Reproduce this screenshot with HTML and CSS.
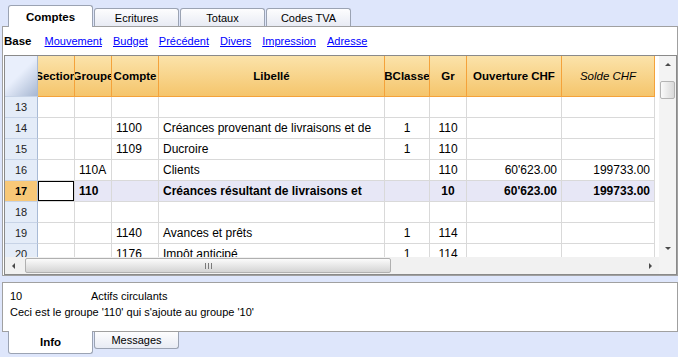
FILE: index.html
```html
<!DOCTYPE html>
<html lang="fr">
<head>
    <meta charset="UTF-8">
    <title>Comptes</title>
    <link rel="stylesheet" href="styles.css">
</head>
<body>

    <div class="tabs tabs-top">
        <div class="tab active">Comptes</div>
        <div class="tab">Ecritures</div>
        <div class="tab">Totaux</div>
        <div class="tab">Codes TVA</div>
    </div>

    <div class="panel main">
        <div class="views">
            <b>Base</b>
            <a href="#">Mouvement</a>
            <a href="#">Budget</a>
            <a href="#">Précédent</a>
            <a href="#">Divers</a>
            <a href="#">Impression</a>
            <a href="#">Adresse</a>
        </div>

        <div class="grid">
            <div class="grid-body">
                <div class="sheet">
                    <!-- header -->
                    <div class="c h corner"></div>
                    <div class="c h">Section</div>
                    <div class="c h">Groupe</div>
                    <div class="c h">Compte</div>
                    <div class="c h">Libellé</div>
                    <div class="c h">BClasse</div>
                    <div class="c h">Gr</div>
                    <div class="c h">Ouverture CHF</div>
                    <div class="c h it">Solde CHF</div>

                    <!-- 13 -->
                    <div class="c rn">13</div>
                    <div class="c"></div><div class="c"></div><div class="c"></div><div class="c"></div>
                    <div class="c mid"></div><div class="c mid"></div><div class="c r"></div><div class="c r"></div>

                    <!-- 14 -->
                    <div class="c rn">14</div>
                    <div class="c"></div><div class="c"></div><div class="c">1100</div>
                    <div class="c">Créances provenant de livraisons et de</div>
                    <div class="c mid">1</div><div class="c mid">110</div><div class="c r"></div><div class="c r"></div>

                    <!-- 15 -->
                    <div class="c rn">15</div>
                    <div class="c"></div><div class="c"></div><div class="c">1109</div>
                    <div class="c">Ducroire</div>
                    <div class="c mid">1</div><div class="c mid">110</div><div class="c r"></div><div class="c r"></div>

                    <!-- 16 -->
                    <div class="c rn">16</div>
                    <div class="c"></div><div class="c">110A</div><div class="c"></div>
                    <div class="c">Clients</div>
                    <div class="c mid"></div><div class="c mid">110</div>
                    <div class="c r">60'623.00</div><div class="c r">199733.00</div>

                    <!-- 17 (current row) -->
                    <div class="c rn cur">17</div>
                    <div class="c sel focus"></div><div class="c sel">110</div><div class="c sel"></div>
                    <div class="c sel">Créances résultant de livraisons et</div>
                    <div class="c sel mid"></div><div class="c sel mid">10</div>
                    <div class="c sel r">60'623.00</div><div class="c sel r">199733.00</div>

                    <!-- 18 -->
                    <div class="c rn">18</div>
                    <div class="c"></div><div class="c"></div><div class="c"></div><div class="c"></div>
                    <div class="c mid"></div><div class="c mid"></div><div class="c r"></div><div class="c r"></div>

                    <!-- 19 -->
                    <div class="c rn">19</div>
                    <div class="c"></div><div class="c"></div><div class="c">1140</div>
                    <div class="c">Avances et prêts</div>
                    <div class="c mid">1</div><div class="c mid">114</div><div class="c r"></div><div class="c r"></div>

                    <!-- 20 -->
                    <div class="c rn">20</div>
                    <div class="c"></div><div class="c"></div><div class="c">1176</div>
                    <div class="c">Impôt anticipé</div>
                    <div class="c mid">1</div><div class="c mid">114</div><div class="c r"></div><div class="c r"></div>
                </div>

                <div class="vscroll">
                    <div class="sbtn"><span class="arr up"></span></div>
                    <div class="vthumb"></div>
                    <div class="track"></div>
                    <div class="sbtn"><span class="arr down"></span></div>
                </div>
            </div>

            <div class="hbar">
                <div class="hscroll">
                    <div class="sbtn"><span class="arr left"></span></div>
                    <div class="hthumb"><span class="grip"></span></div>
                    <div class="track"></div>
                    <div class="sbtn"><span class="arr right"></span></div>
                </div>
                <div class="hcorner"></div>
            </div>
        </div>
    </div>

    <div class="panel info">
        <div class="info-line"><span class="info-code">10</span><span>Actifs circulants</span></div>
        <div class="info-line">Ceci est le groupe '110' qui s'ajoute au groupe '10'</div>
    </div>

    <div class="tabs tabs-bottom">
        <div class="tab active">Info</div>
        <div class="tab">Messages</div>
    </div>

</body>
</html>
```

FILE: styles.css
```css
body {
    margin: 0;
    width: 678px;
    height: 357px;
    overflow: hidden;
    background-color: #dee6fb;
    font-family: "Liberation Sans", Arial, sans-serif;
    font-size: 11px;
    color: #000;
}

/* tabs */
.tabs {
    display: flex;
    gap: 1px;
    padding-left: 8px;
}
.tab {
    width: 85px;
    box-sizing: border-box;
    display: flex;
    align-items: center;
    justify-content: center;
    border: 1px solid #9ba3b3;
    background: linear-gradient(#fdfdfe, #e8ebf4);
}
.tabs-top {
    height: 26px;
    align-items: flex-end;
}
.tabs-top .tab {
    height: 18px;
    border-bottom: none;
    border-radius: 3px 3px 0 0;
}
.tabs-top .tab.active {
    height: 22px;
    margin-bottom: -1px;
    background: #fff;
    font-weight: bold;
    font-size: 11.5px;
    position: relative;
    z-index: 1;
}
.tabs-bottom {
    margin-top: -1px;
    align-items: flex-start;
}
.tabs-bottom .tab {
    height: 17px;
    margin-top: 1px;
    border-top: none;
    border-radius: 0 0 3px 3px;
}
.tabs-bottom .tab.active {
    height: 23px;
    margin-top: 0;
    background: #fff;
    font-weight: bold;
    font-size: 11.5px;
    position: relative;
    z-index: 1;
}

/* panels */
.panel {
    margin-left: 2px;
    box-sizing: border-box;
    background-color: #fff;
    border: 1px solid #a0a0a0;
}
.main {
    height: 250px;
}
.views {
    height: 28px;
    display: flex;
    align-items: center;
    gap: 11px;
    padding-left: 1px;
}
.views b {
    font-size: 11.5px;
    margin-right: 2px;
}
.views a {
    color: #0000ff;
    text-decoration: underline;
}

/* grid */
.grid {
    margin-left: 1px;
    height: 220px;
    box-sizing: border-box;
    border: 1px solid #8a8a8a;
    display: flex;
    flex-direction: column;
}
.grid-body {
    display: flex;
    height: 201px;
}
.sheet {
    width: 650px;
    overflow: hidden;
    display: grid;
    grid-template-columns: 33px 37px 37px 47px 226px 45px 37px 95px 93px;
    grid-template-rows: 41px;
    grid-auto-rows: 21px;
}
.c {
    box-sizing: border-box;
    border-right: 1px solid #d9d9d9;
    border-bottom: 1px solid #d9d9d9;
    padding: 0 4px;
    display: flex;
    align-items: center;
    white-space: nowrap;
    overflow: hidden;
    font-size: 12px;
}
.mid {
    justify-content: center;
}
.r {
    justify-content: flex-end;
}
.h {
    padding: 0;
    justify-content: center;
    background: linear-gradient(#fbe3aa, #f5c56c);
    border-color: #f4a23a;
    font-weight: bold;
    font-size: 11.5px;
}
.h.it {
    font-style: italic;
    font-weight: normal;
}
.h.corner {
    background: linear-gradient(135deg, #e9effc 45%, #a7b7d2);
    border-right-color: #a8bad5;
    border-bottom-color: #c7d3e6;
}
.rn {
    justify-content: center;
    background-color: #e4ecf8;
    border-right-color: #a8bad5;
    border-bottom-color: #c7d3e6;
    font-size: 11px;
    color: #222;
}
.rn.cur {
    background-color: #f8c878;
    font-weight: bold;
    color: #000;
}
.sel {
    background-color: #e7e7f6;
    font-weight: bold;
}
.sel.focus {
    background-color: #fff;
    box-shadow: inset 0 0 0 1px #000;
}

/* scrollbars */
.vscroll {
    width: 17px;
    margin-left: auto;
    background-color: #f3f3f3;
    display: flex;
    flex-direction: column;
}
.sbtn {
    width: 17px;
    height: 17px;
    display: flex;
    align-items: center;
    justify-content: center;
    flex-shrink: 0;
}
.track {
    flex: 1;
}
.arr {
    width: 0;
    height: 0;
}
.arr.up {
    border-left: 3px solid transparent;
    border-right: 3px solid transparent;
    border-bottom: 3px solid #4a4a4a;
}
.arr.down {
    border-left: 3px solid transparent;
    border-right: 3px solid transparent;
    border-top: 3px solid #4a4a4a;
}
.arr.left {
    border-top: 3px solid transparent;
    border-bottom: 3px solid transparent;
    border-right: 3px solid #4a4a4a;
}
.arr.right {
    border-top: 3px solid transparent;
    border-bottom: 3px solid transparent;
    border-left: 3px solid #4a4a4a;
}
.vthumb {
    margin: 8px 1px 0;
    height: 16px;
    border: 1px solid #b4b4b4;
    border-radius: 2px;
    background: linear-gradient(90deg, #fafafa, #d9d9d9);
}
.hbar {
    display: flex;
    height: 17px;
}
.hscroll {
    flex: 1;
    display: flex;
    align-items: center;
    background-color: #f1f1f1;
}
.hthumb {
    width: 366px;
    height: 15px;
    margin-left: 3px;
    box-sizing: border-box;
    border: 1px solid #b0b0b0;
    border-radius: 2px;
    background: linear-gradient(#fbfbfb, #d4d4d4);
    display: flex;
    align-items: center;
    justify-content: center;
}
.grip {
    width: 7px;
    height: 6px;
    background: repeating-linear-gradient(90deg, #7a7a7a 0 1px, transparent 1px 3px);
}
.hcorner {
    width: 17px;
    background-color: #f3f3f3;
}

/* info */
.info {
    margin-top: 6px;
    height: 50px;
    padding: 5px 0 0 7px;
    line-height: 16px;
}
.info-code {
    display: inline-block;
    width: 81px;
}
```
